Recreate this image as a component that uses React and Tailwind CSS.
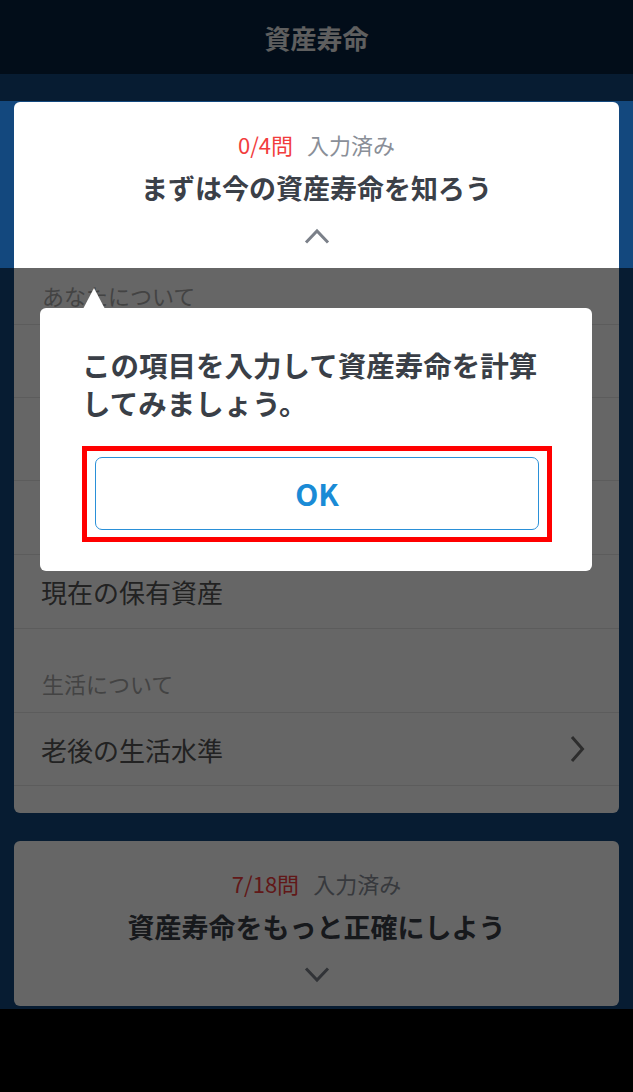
import React from 'react'

const FONT = { fontFamily: '"Noto Sans CJK JP", "Noto Sans", sans-serif' }

// rows under the coach-mark bubble carry no label of their own here
const SECTIONS = [
  {
    title: 'あなたについて',
    spacer: false,
    rows: [
      { id: 'r1', label: '', h: 'h-[73px]' },
      { id: 'r2', label: '', h: 'h-[83px]' },
      { id: 'r3', label: '', h: 'h-[74px]' },
      { id: 'r4', label: '現在の保有資産', h: 'h-[74px]' },
    ],
  },
  {
    title: '生活について',
    spacer: true,
    rows: [{ id: 'r5', label: '老後の生活水準', h: 'h-[73px]', chevron: true }],
  },
]

function ChevronUp() {
  return (
    <svg width="26" height="18" viewBox="0 0 26 18" fill="none">
      <path d="M2 15.5 L13 4 L24 15.5" stroke="#7b8089" strokeWidth="3" />
    </svg>
  )
}

function ChevronDown() {
  return (
    <svg width="26" height="18" viewBox="0 0 26 18" fill="none">
      <path d="M2 2.5 L13 14 L24 2.5" stroke="#7b8089" strokeWidth="3" />
    </svg>
  )
}

function ChevronRight() {
  return (
    <svg width="16" height="28" viewBox="0 0 16 28" fill="none">
      <path d="M3 2 L13.5 14 L3 26" stroke="#707070" strokeWidth="3" />
    </svg>
  )
}

function StepHeader({ done, total, title, open }) {
  return (
    <div className="flex h-[166px] flex-col items-center pt-[28px]">
      <p className="text-[22px] leading-[28px]">
        <span className="text-[#f23d3d]">
          {done}/{total}問
        </span>
        <span className="ml-[14px] text-[#8a8f98]">入力済み</span>
      </p>
      <h2 className="mt-[13px] text-[27px] font-bold leading-[34px] text-[#3b4048]">
        {title}
      </h2>
      <div className="mt-[22px]">{open ? <ChevronUp /> : <ChevronDown />}</div>
    </div>
  )
}

export default function App() {
  return (
    <div
      style={FONT}
      className="relative h-[1092px] w-[633px] overflow-hidden bg-[#13487e]"
    >
      <header className="flex h-[74px] items-center justify-center bg-[#072240]">
        <h1 className="text-[26px] font-bold text-[#eeeeee]">資産寿命</h1>
      </header>

      <main className="flex flex-col gap-[28px] px-[14px] pt-[28px] pb-[3px]">
        {/* current step, expanded */}
        <section className="rounded-[6px] bg-white">
          <StepHeader done={0} total={4} title="まずは今の資産寿命を知ろう" open />
          <div>
            {SECTIONS.map((sec) => (
              <div key={sec.title}>
                <div
                  className={`flex items-end border-b border-[#e6e6e6] px-[28px] pb-[14px] text-[22px] leading-[30px] text-[#a8a8a8] ${
                    sec.spacer ? 'h-[84px]' : 'h-[57px]'
                  }`}
                >
                  {sec.title}
                </div>
                {sec.rows.map((row) => (
                  <div
                    key={row.id}
                    className={`flex items-center justify-between border-b border-[#e6e6e6] pl-[27px] pr-[34px] text-[26px] text-[#555555] ${row.h}`}
                  >
                    <span>{row.label}</span>
                    {row.chevron && <ChevronRight />}
                  </div>
                ))}
              </div>
            ))}
            <div className="h-[27px]" />
          </div>
        </section>

        {/* next step, collapsed */}
        <section className="h-[165px] rounded-[6px] bg-white">
          <StepHeader done={7} total={18} title="資産寿命をもっと正確にしよう" />
        </section>
      </main>

      <div className="h-[83px] bg-black" />

      {/* coach-mark: dim everything except the current step header */}
      <div className="pointer-events-none absolute left-0 top-[101px] h-[167px] w-full shadow-[0_0_0_2000px_rgba(0,0,0,0.6)]" />

      <div className="absolute left-[40px] top-[308px] h-[263px] w-[552px] rounded-[6px] bg-white">
        <svg
          className="absolute left-[43px] top-[-20px]"
          width="22"
          height="21"
          viewBox="0 0 22 21"
        >
          <polygon points="11,0 22,21 0,21" fill="#ffffff" />
        </svg>
        <p className="pl-[42px] pr-[20px] pt-[38px] text-[28.5px] font-bold leading-[38px] text-[#3a3f47]">
          この項目を入力して資産寿命を計算
          <br />
          してみましょう。
        </p>
        <div className="ml-[42px] mt-[24px] w-[470px] border-[5px] border-[#ff0000] px-[8px] pb-[7px] pt-[6px]">
          <button className="flex h-[73px] w-full items-center justify-center rounded-[7px] border-[1.5px] border-[#2a90d8] bg-white text-[30px] font-semibold text-[#1a8bd6]">
            OK
          </button>
        </div>
      </div>
    </div>
  )
}
